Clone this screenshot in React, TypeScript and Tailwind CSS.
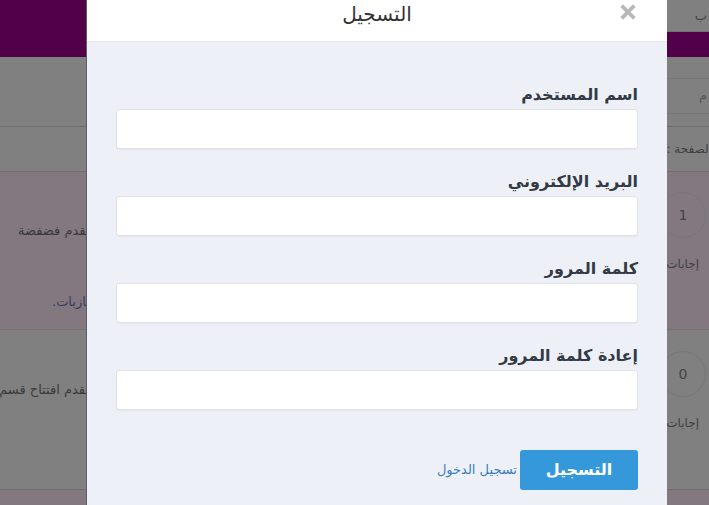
import React from "react";

const font = { fontFamily: '"DejaVu Sans", "Noto Sans", sans-serif' };

function Field({ label, type = "text" }: { label: string; type?: string }) {
  return (
    <div className="mb-[22px]">
      <div className="text-[16px] leading-[22px] font-bold text-[#333a45] mb-[3px]">{label}</div>
      <input
        type={type}
        className="block w-full h-[40px] bg-white border border-[#dfe3e8] rounded-[3px] shadow-[0_1px_1px_rgba(0,0,0,0.04)] outline-none"
      />
    </div>
  );
}

function Answers({ n, top }: { n: string; top: string }) {
  return (
    <div className={`w-[52px] flex flex-col ${top}`}>
      <div className="ml-[3px] w-[46px] h-[46px] rounded-full border border-[#777] flex items-center justify-center text-[14px] text-[#444]">
        {n}
      </div>
      <div className="mt-[17px] flex justify-end pr-[10px]">
        <span className="text-[12px] text-[#3f3f3f] whitespace-nowrap" dir="rtl">إجابات</span>
      </div>
    </div>
  );
}

export default function App() {
  return (
    <div className="relative w-[709px] h-[505px] overflow-hidden bg-[#808080]" style={font}>
      {/* background page (dimmed) */}
      <div className="flex flex-col w-full h-full">
        <div className="flex h-[57px]">
          <div className="flex-1 bg-[#52004a]" />
          <div className="w-[43px] flex flex-col">
            <div className="h-[32px] bg-[#808080] border-b border-[#727272] flex items-center justify-end pr-[2px] text-[13px] text-[#444]">
              ب
            </div>
            <div className="flex-1 bg-[#52004a]" />
          </div>
        </div>
        <div className="h-[70px] border-b border-[#6f6f6f] flex flex-col">
          <div className="h-[21px]" />
          <div className="h-[36px] border-y border-[#777] ml-auto w-[43px] flex items-center justify-end pr-[2px] text-[13px] text-[#555]">
            م
          </div>
        </div>
        <div className="h-[45px] border-b border-[#6f6f6f] flex items-center justify-end text-[12px] text-[#3f3f3f]">
          <span className="-mr-[3px] whitespace-nowrap" dir="rtl">الصفحة :</span>
        </div>
        <div className="h-[158px] bg-[#83787f] border-b border-[#737373] flex">
          <div className="flex-1 relative">
            <div className="absolute left-[18px] top-[49px] whitespace-nowrap text-[13px] text-[#3b3b3b]" dir="rtl">
              عضو جديد يقدم فضفضة
            </div>
            <div className="absolute left-[52px] top-[120px] whitespace-nowrap text-[13px] text-[#34405a]" dir="rtl">
              عازبات.
            </div>
          </div>
          <Answers n="1" top="pt-[20px]" />
        </div>
        <div className="h-[160px] bg-[#808080] border-b border-[#6f6f6f] flex">
          <div className="flex-1 relative">
            <div className="absolute right-[568px] top-[50px] whitespace-nowrap text-[13px] text-[#3b3b3b]" dir="rtl">
              يقدم افتتاح قسم جديد للمنتدى
            </div>
          </div>
          <Answers n="0" top="pt-[21px]" />
        </div>
        <div className="flex-1 bg-[#83787f]" />
      </div>

      {/* modal */}
      <div className="absolute left-[86px] top-0 w-[581px] h-[520px] bg-[#edf1f7] border-l border-[#5c5c66] flex flex-col" dir="rtl">
        <div className="h-[42px] bg-white border-b border-[#e3e6ea] relative flex items-center justify-center">
          <div className="text-[20px] text-[#333] leading-none -mt-[13px]">التسجيل</div>
          <svg className="absolute left-[533px] top-[4px]" width="16" height="16" viewBox="0 0 16 16">
            <path d="M3 3 L13 13 M13 3 L3 13" stroke="#b8b8b8" strokeWidth="3.8" strokeLinecap="square" />
          </svg>
        </div>
        <div className="px-[29px] pt-[42px]">
          <Field label="اسم المستخدم" />
          <Field label="البريد الإلكتروني" />
          <Field label="كلمة المرور" type="password" />
          <Field label="إعادة كلمة المرور" type="password" />
          <div className="flex items-center gap-[3px] mt-[40px]">
            <button className="w-[118px] h-[40px] bg-[#3498db] rounded-[3px] text-white text-[16px] font-bold">
              التسجيل
            </button>
            <a className="text-[13px] text-[#3a7cc0]">تسجيل الدخول</a>
          </div>
        </div>
      </div>
    </div>
  );
}
